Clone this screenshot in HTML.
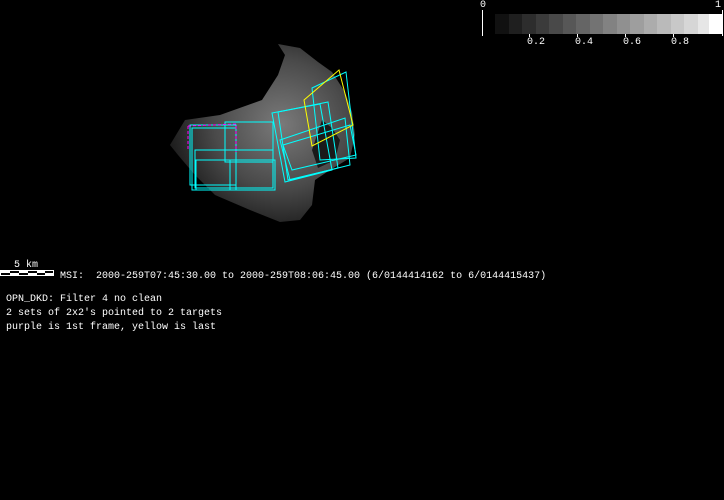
<html><head><style>
body{margin:0;background:#000;width:724px;height:500px;overflow:hidden;position:relative;font-family:"Liberation Mono",monospace;color:#fff;font-size:10px}
.t{position:absolute;white-space:pre;line-height:12px}
</style></head><body>
<svg width="724" height="500" style="position:absolute;left:0;top:0">
<defs><radialGradient id="g" cx="0.6" cy="0.45" r="0.6"><stop offset="0" stop-color="#7a7a7a"/><stop offset="0.6" stop-color="#4a4a4a"/><stop offset="1" stop-color="#1e1e1e"/></radialGradient></defs>
<path d="M278,44 L300,48 L318,62 L332,72 L345,92 L352,112 L355,135 L350,158 L330,170 L315,180 L312,205 L300,220 L280,222 L250,210 L215,195 L195,175 L178,155 L170,145 L185,120 L220,115 L262,100 L278,75 L285,55 Z" fill="url(#g)"/>
<path d="M312,150 L322,120 L332,128 L340,140 L335,160 L318,168 Z" fill="#1a1a1a"/>
<g fill="none" stroke="#0ff" stroke-width="1">
<rect x="190" y="125" width="46" height="60"/><rect x="192" y="128" width="44" height="62"/>
<rect x="195" y="150" width="78" height="38"/><rect x="225" y="122" width="48" height="40"/>
<rect x="196" y="160" width="40" height="30"/><rect x="230" y="160" width="45" height="30"/>
<polygon points="272,113 320,104 332,170 285,182"/><polygon points="278,112 328,102 338,168 288,180"/>
<polygon points="280,140 345,118 350,165 290,180"/><polygon points="283,145 350,125 356,155 292,170"/>
<polygon points="312,88 346,72 356,158 320,160"/>
</g>
<g fill="none" stroke="#ff0"><polygon points="304,100 339,70 353,125 312,146"/></g>
<g fill="none" stroke="#f0f" stroke-dasharray="3,2"><polyline points="188,126 236,124 236,152"/><line x1="188" y1="126" x2="188" y2="150"/></g>
<g>
<rect x="495" y="14" width="14" height="20" fill="#111"/><rect x="509" y="14" width="14" height="20" fill="#1f1f1f"/><rect x="522" y="14" width="14" height="20" fill="#2d2d2d"/><rect x="536" y="14" width="14" height="20" fill="#3b3b3b"/><rect x="549" y="14" width="14" height="20" fill="#494949"/><rect x="563" y="14" width="14" height="20" fill="#575757"/><rect x="576" y="14" width="14" height="20" fill="#656565"/><rect x="590" y="14" width="14" height="20" fill="#737373"/><rect x="603" y="14" width="14" height="20" fill="#828282"/><rect x="617" y="14" width="14" height="20" fill="#909090"/><rect x="630" y="14" width="14" height="20" fill="#9e9e9e"/><rect x="644" y="14" width="14" height="20" fill="#acacac"/><rect x="657" y="14" width="14" height="20" fill="#bababa"/><rect x="671" y="14" width="14" height="20" fill="#c8c8c8"/><rect x="684" y="14" width="14" height="20" fill="#d6d6d6"/><rect x="698" y="14" width="12" height="20" fill="#e6e6e6"/><rect x="709" y="14" width="13" height="20" fill="#fff"/>
</g>
<g stroke="#fff"><line x1="482.5" y1="10" x2="482.5" y2="36"/><line x1="722.5" y1="10" x2="722.5" y2="36"/>
<line x1="529.5" y1="34" x2="529.5" y2="37"/><line x1="577.5" y1="34" x2="577.5" y2="37"/><line x1="625.5" y1="34" x2="625.5" y2="37"/><line x1="673.5" y1="34" x2="673.5" y2="37"/></g>
<rect x="0" y="270" width="54" height="6" fill="#fff"/>
<rect x="1" y="271" width="52" height="4" fill="#000"/>
<rect x="1" y="271" width="9" height="2" fill="#fff"/><rect x="10" y="273" width="9" height="2" fill="#fff"/><rect x="19" y="271" width="9" height="2" fill="#fff"/><rect x="28" y="273" width="9" height="2" fill="#fff"/><rect x="37" y="271" width="8" height="2" fill="#fff"/><rect x="45" y="273" width="8" height="2" fill="#fff"/>
</svg>
<div class="t" style="left:480px;top:0px">0</div>
<div class="t" style="left:715px;top:0px">1</div>
<div class="t" style="left:527px;top:37px">0.2</div>
<div class="t" style="left:575px;top:37px">0.4</div>
<div class="t" style="left:623px;top:37px">0.6</div>
<div class="t" style="left:671px;top:37px">0.8</div>
<div class="t" style="left:14px;top:260px">5 km</div>
<div class="t" style="left:60px;top:271px">MSI:  2000-259T07:45:30.00 to 2000-259T08:06:45.00 (6/0144414162 to 6/0144415437)</div>
<div class="t" style="left:6px;top:294px">OPN_DKD: Filter 4 no clean</div>
<div class="t" style="left:6px;top:308px">2 sets of 2x2's pointed to 2 targets</div>
<div class="t" style="left:6px;top:322px">purple is 1st frame, yellow is last</div>
</body></html>
